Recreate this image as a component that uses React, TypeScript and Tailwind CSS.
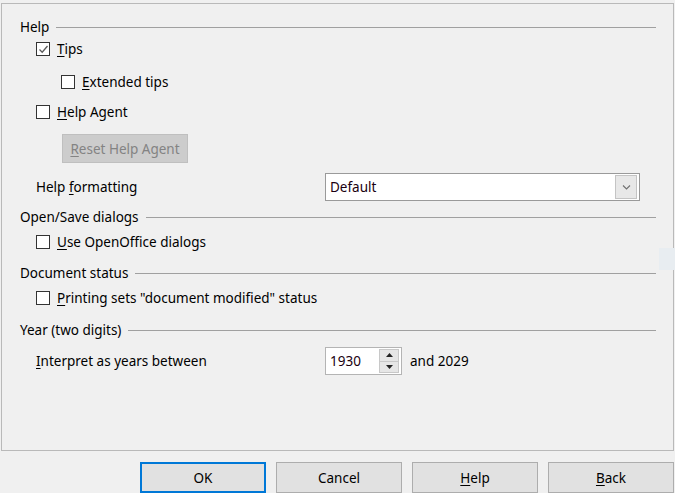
import React from "react";

function Ul({ k, rest }: { k: string; rest: string }) {
  return (
    <span>
      <span className="underline underline-offset-2">{k}</span>
      {rest}
    </span>
  );
}

function Heading({ text, className = "" }: { text: string; className?: string }) {
  return (
    <div className={`flex items-center h-[20px] ${className}`}>
      <span className="whitespace-nowrap">{text}</span>
      <div className="flex-1 ml-[7px] h-px bg-[#a0a0a0]" />
    </div>
  );
}

function Check({ checked = false }: { checked?: boolean }) {
  return (
    <span className="w-[14px] h-[14px] border border-[#333333] bg-white flex items-center justify-center shrink-0">
      {checked && (
        <svg width="11" height="11" viewBox="0 0 11 11">
          <path d="M1.5 5.5 L4.2 8.2 L9.5 2" fill="none" stroke="#5a5a5a" strokeWidth="1.3" />
        </svg>
      )}
    </span>
  );
}

function CheckRow({
  k,
  rest,
  checked,
  className = "",
}: {
  k: string;
  rest: string;
  checked?: boolean;
  className?: string;
}) {
  return (
    <div className={`flex items-center h-[20px] gap-[7px] ${className}`}>
      <Check checked={checked} />
      <Ul k={k} rest={rest} />
    </div>
  );
}

function DlgButton({ children, focused = false }: { children: React.ReactNode; focused?: boolean }) {
  return (
    <button
      className={`w-[126px] h-[31px] bg-[#e1e1e1] flex items-center justify-center ${
        focused ? "border-2 border-[#0078d7]" : "border border-[#adadad]"
      }`}
    >
      {children}
    </button>
  );
}

export default function App() {
  return (
    <div
      className="w-[675px] h-[493px] bg-[#f0f0f0] relative overflow-hidden text-[13.5px] leading-[20px] text-black"
      style={{ fontFamily: '"Noto Sans", "Open Sans", sans-serif' }}
    >
      <div className="ml-[1px] mt-[3px] w-[673px] h-[448px] border border-[#b9b9b9] pl-[18px] pr-[17px] pt-[13px]">
        <Heading text="Help" />
        <div className="pl-[16px]">
          <CheckRow k="T" rest="ips" checked className="mt-[2px]" />
          <CheckRow k="E" rest="xtended tips" className="mt-[13px] ml-[25px]" />
          <CheckRow k="H" rest="elp Agent" className="mt-[10px]" />
          <div className="mt-[12px] ml-[26px] w-[126px] h-[29px] bg-[#cccccc] border border-[#bfbfbf] flex items-center justify-center text-[#838383]">
            <Ul k="R" rest="eset Help Agent" />
          </div>
          <div className="mt-[10px] flex items-center h-[28px]">
            <span className="w-[289px]">
              Help <span className="underline underline-offset-2">f</span>ormatting
            </span>
            <div className="w-[315px] h-[28px] bg-white border border-[#9a9a9a] flex items-center pl-[4px] pr-[2px]">
              <span className="flex-1 text-[#1a0010]">Default</span>
              <span className="w-[22px] h-[24px] bg-[#e8e8e8] border border-[#c4c4c4] flex items-center justify-center">
                <svg width="9" height="5" viewBox="0 0 9 5">
                  <path d="M1 0.5 L4.5 4 L8 0.5" fill="none" stroke="#707070" strokeWidth="1.1" />
                </svg>
              </span>
            </div>
          </div>
        </div>

        <Heading text="Open/Save dialogs" className="mt-[6px]" />
        <div className="pl-[16px]">
          <CheckRow k="U" rest="se OpenOffice dialogs" className="mt-[5px]" />
        </div>

        <Heading text="Document status" className="mt-[11px]" />
        <div className="pl-[16px]">
          <CheckRow k="P" rest={'rinting sets "document modified" status'} className="mt-[5px]" />
        </div>

        <Heading text="Year (two digits)" className="mt-[12px]" />
        <div className="pl-[16px] mt-[7px] flex items-center h-[28px]">
          <span className="w-[289px]">
            <Ul k="I" rest="nterpret as years between" />
          </span>
          <div className="w-[77px] h-[28px] bg-white border border-[#b4b4b4] flex items-center pl-[4px] pr-[2px]">
            <span className="flex-1 text-[#1a0010]">1930</span>
            <span className="w-[20px] h-[24px] bg-[#e6e6e6] border border-[#c8c8c8] flex flex-col">
              <span className="flex-1 flex items-center justify-center border-b border-[#c8c8c8]">
                <svg width="7" height="4" viewBox="0 0 7 4">
                  <path d="M0 4 L3.5 0 L7 4 Z" fill="#222" />
                </svg>
              </span>
              <span className="flex-1 flex items-center justify-center">
                <svg width="7" height="4" viewBox="0 0 7 4">
                  <path d="M0 0 L3.5 4 L7 0 Z" fill="#222" />
                </svg>
              </span>
            </span>
          </div>
          <span className="ml-[8px]">and 2029</span>
        </div>
      </div>

      <div className="absolute right-0 top-[248px] w-[16px] h-[22px] bg-[#e8edf1]" />

      <div className="mt-[11px] pl-[140px] flex gap-[10px]">
        <DlgButton focused>OK</DlgButton>
        <DlgButton>Cancel</DlgButton>
        <DlgButton>
          <Ul k="H" rest="elp" />
        </DlgButton>
        <DlgButton>
          <Ul k="B" rest="ack" />
        </DlgButton>
      </div>
    </div>
  );
}
